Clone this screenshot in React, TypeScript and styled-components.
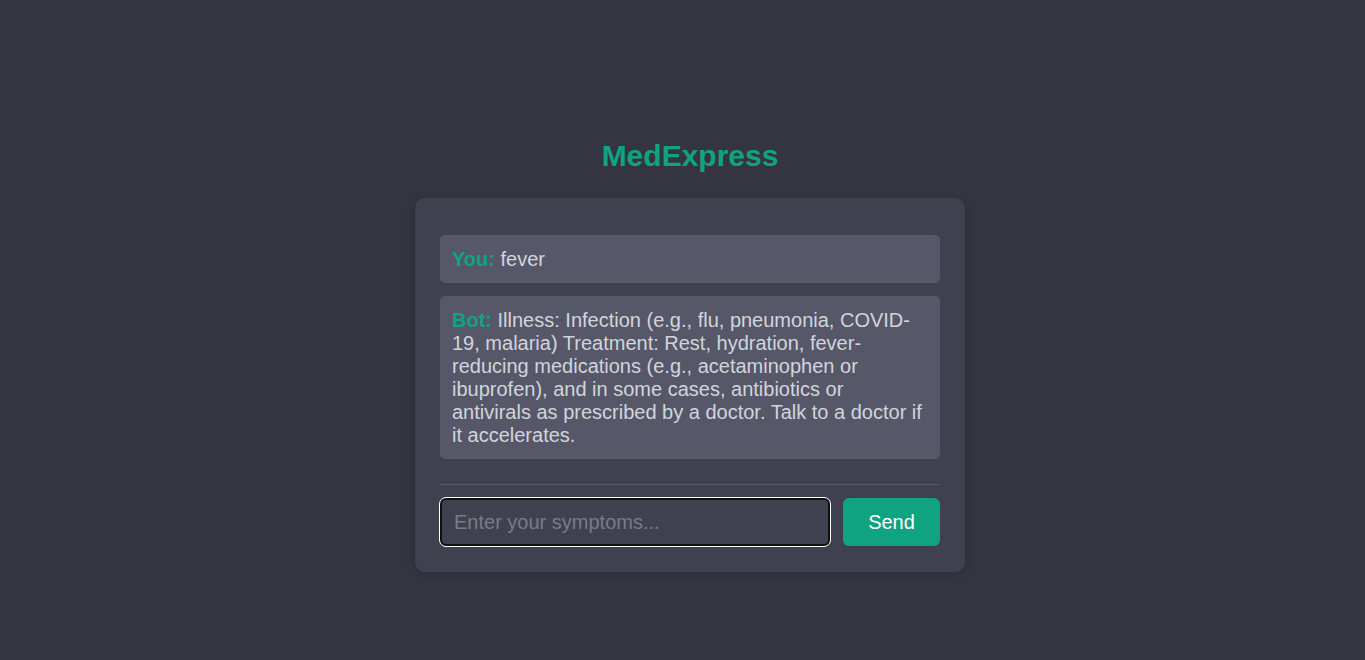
import React, { useState } from 'react';
import styled, { createGlobalStyle } from 'styled-components';

const GlobalStyle = createGlobalStyle`
  html, body {
    margin: 0;
    padding: 0;
    background-color: #343541;
    font-family: 'Liberation Sans', Arial, sans-serif;
  }
`;

const Page = styled.div`
  min-height: 100vh;
  box-sizing: border-box;
  display: flex;
  flex-direction: column;
  align-items: center;
  padding: 139px 0 0 15px;
`;

const Title = styled.h1`
  margin: 0 0 25px;
  color: #10a37f;
  font-size: 30px;
  font-weight: bold;
  line-height: normal;
`;

const Card = styled.div`
  width: 550px;
  box-sizing: border-box;
  padding: 25px 25px 26px;
  background-color: #40414f;
  border-radius: 10px;
  box-shadow: 0 2px 10px rgba(0, 0, 0, 0.15);
`;

const ChatLog = styled.div`
  display: flex;
  flex-direction: column;
  gap: 13px;
  padding: 12px 0 25px;
  border-bottom: 1px solid #565869;
`;

const Message = styled.div`
  padding: 12.5px 15px 12.5px 12px;
  background-color: #565869;
  border-radius: 5px;
  color: #d1d5db;
  font-size: 20px;
  line-height: 23px;
`;

const Sender = styled.strong`
  color: #10a37f;
`;

const InputRow = styled.form`
  display: flex;
  align-items: center;
  gap: 13px;
  margin-top: 13px;
`;

const SymptomInput = styled.input`
  flex: 1;
  height: 48px;
  box-sizing: border-box;
  padding: 0 12px;
  background-color: #40414f;
  border: 2px solid #101010;
  border-radius: 6px;
  outline: 1px solid #ffffff;
  color: #d1d5db;
  caret-color: #d1d5db;
  font-family: 'Liberation Sans', Arial, sans-serif;
  font-size: 20px;
  &::placeholder {
    color: #7a7a86;
  }
  &:focus {
    outline: 1px solid #ffffff;
  }
`;

const SendButton = styled.button`
  width: 97px;
  height: 48px;
  border: none;
  border-radius: 6px;
  background-color: #10a37f;
  color: #ffffff;
  font-family: 'Liberation Sans', Arial, sans-serif;
  font-size: 20px;
  cursor: pointer;
`;

const App = () => {
  const [symptoms, setSymptoms] = useState('');

  const handleSubmit = (event: React.FormEvent) => {
    event.preventDefault();
  };

  return (
    <>
      <GlobalStyle />
      <Page>
        <Title>MedExpress</Title>
        <Card>
          <ChatLog>
            <Message>
              <Sender>You:</Sender> fever
            </Message>
            <Message>
              <Sender>Bot:</Sender> Illness: Infection (e.g., flu, pneumonia,
              COVID-19, malaria) Treatment: Rest, hydration, fever-reducing
              medications (e.g., acetaminophen or ibuprofen), and in some
              cases, antibiotics or antivirals as prescribed by a doctor. Talk
              to a doctor if it accelerates.
            </Message>
          </ChatLog>
          <InputRow onSubmit={handleSubmit}>
            <SymptomInput
              autoFocus
              placeholder='Enter your symptoms...'
              value={symptoms}
              onChange={(e) => setSymptoms(e.currentTarget.value)}
            />
            <SendButton type='submit'>Send</SendButton>
          </InputRow>
        </Card>
      </Page>
    </>
  );
};

export default App;
